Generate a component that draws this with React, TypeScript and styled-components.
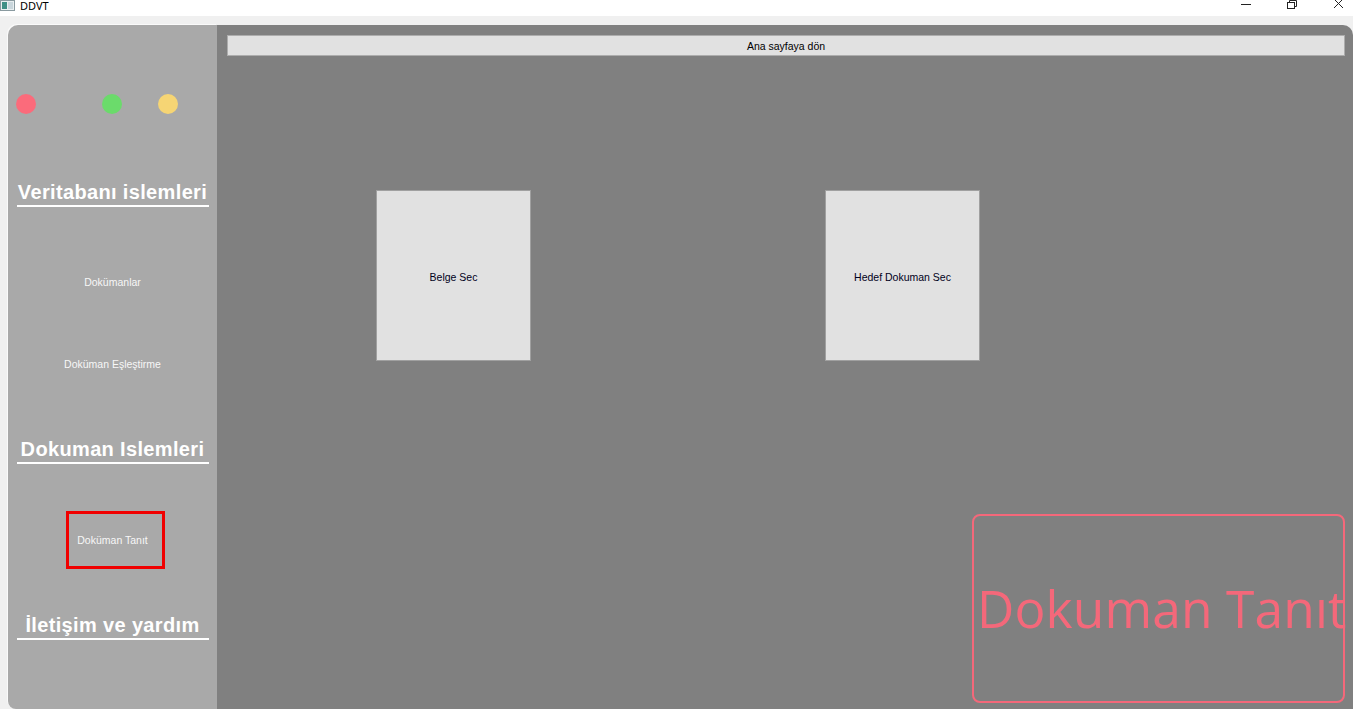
import React from "react";
import styled, { createGlobalStyle } from "styled-components";

const GlobalStyle = createGlobalStyle`
  html, body { margin: 0; padding: 0; }
  body {
    background: #f0f0f0;
    font-family: "Liberation Sans", Arial, sans-serif;
    overflow: hidden;
  }
`;

const Page = styled.div`
  width: 1353px;
  height: 709px;
  display: flex;
  flex-direction: column;
  overflow: hidden;
`;

const TitleBar = styled.div`
  height: 16px;
  background: #ffffff;
  display: flex;
  align-items: flex-start;
  flex-shrink: 0;
`;

const AppIcon = styled.svg`
  width: 15px;
  height: 11px;
  margin-right: 5px;
`;

const TitleText = styled.span`
  font-family: "Noto Sans", "Liberation Sans", sans-serif;
  font-size: 11px;
  line-height: 12px;
  margin-top: 0;
  color: #000;
`;

const Controls = styled.div`
  margin-left: auto;
  display: flex;
  align-items: flex-start;
  gap: 35px;
  padding-right: 9px;
`;

const CtrlIcon = styled.svg`
  width: 11px;
  height: 9px;
  display: block;
`;

const Body = styled.div`
  flex: 1;
  display: flex;
  padding: 9px 0 0 8px;
  min-height: 0;
`;

const Sidebar = styled.nav`
  width: 209px;
  flex-shrink: 0;
  background: #a9a9a9;
  border-radius: 10px 0 0 8px;
  box-shadow: -1px -1px 0 #fafafa;
  display: flex;
  flex-direction: column;
  align-items: center;
  padding-top: 69px;
  box-sizing: border-box;
`;

const DotRow = styled.div`
  align-self: stretch;
  display: flex;
  padding-left: 8px;
  height: 20px;
`;

const Dot = styled.span<{ $color: string; $ml: number }>`
  width: 20px;
  height: 20px;
  border-radius: 50%;
  background: ${(p) => p.$color};
  margin-left: ${(p) => p.$ml}px;
`;

const Heading = styled.h2<{ $mt: number }>`
  width: 192px;
  margin: ${(p) => p.$mt}px 0 0;
  font-family: "Liberation Sans", Arial, sans-serif;
  font-weight: 700;
  font-size: 20px;
  line-height: 22px;
  letter-spacing: 0.35px;
  color: #ffffff;
  text-align: center;
  white-space: nowrap;
  padding-bottom: 2px;
  border-bottom: 2px solid #ffffff;
`;

const NavButton = styled.button<{ $mt: number; $active?: boolean }>`
  width: 99px;
  height: 58px;
  margin-top: ${(p) => p.$mt}px;
  margin-left: ${(p) => (p.$active ? 5 : 0)}px;
  background: transparent;
  border: 3px solid ${(p) => (p.$active ? "#f00000" : "transparent")};
  color: #f7f7f7;
  font-family: "Liberation Sans", Arial, sans-serif;
  font-size: 10.5px;
  white-space: nowrap;
  padding: 0 ${(p) => (p.$active ? 5 : 0)}px 0 0;
  display: flex;
  align-items: center;
  justify-content: center;
  overflow: visible;
`;

const Main = styled.main`
  flex: 1;
  background: #808080;
  border-top-right-radius: 10px;
  display: flex;
  flex-direction: column;
  padding: 10px 8px 6px 10px;
  box-sizing: border-box;
  min-width: 0;
`;

const HomeButton = styled.button`
  height: 21px;
  width: 100%;
  background: #e1e1e1;
  border: 1px solid #adadad;
  font-family: "Liberation Sans", Arial, sans-serif;
  font-size: 10.5px;
  color: #000;
  padding: 0;
`;

const ChooserRow = styled.div`
  display: flex;
  gap: 294px;
  margin-top: 134px;
  padding-left: 149px;
`;

const ChooserButton = styled.button`
  width: 155px;
  height: 171px;
  background: #e1e1e1;
  border: 1px solid #a0a0a0;
  font-family: "Liberation Sans", Arial, sans-serif;
  font-size: 10.5px;
  color: #000020;
  padding: 2px 0 0;
  box-sizing: border-box;
`;

const Preview = styled.div`
  margin-top: auto;
  align-self: flex-end;
  width: 373px;
  height: 189px;
  box-sizing: border-box;
  border: 2px solid #f4687a;
  border-radius: 8px;
  display: flex;
  align-items: center;
  padding-left: 3px;
  overflow: visible;
`;

const PreviewText = styled.span`
  font-family: "Open Sans", "Noto Sans", sans-serif;
  font-size: 51.5px;
  letter-spacing: 0.1px;
  color: #f4687a;
  white-space: nowrap;
  margin-top: -2px;
`;

export default function App() {
  return (
    <Page>
      <GlobalStyle />
      <TitleBar>
        <AppIcon viewBox="0 0 15 11">
          <rect x="0.5" y="0.5" width="14" height="10" fill="#e8eef0" stroke="#8a9aa0" />
          <rect x="2" y="2" width="5" height="7" fill="#3f8f86" />
          <rect x="8" y="2" width="5" height="7" fill="#c9d6dc" />
        </AppIcon>
        <TitleText>DDVT</TitleText>
        <Controls>
          <CtrlIcon viewBox="0 0 11 9">
            <line x1="0" y1="4.5" x2="10" y2="4.5" stroke="#222" strokeWidth="1" />
          </CtrlIcon>
          <CtrlIcon viewBox="0 0 11 9">
            <rect x="0.5" y="2.5" width="7" height="6" fill="none" stroke="#222" />
            <path d="M2.5 2.5 V0.5 H9.5 V6.5 H7.5" fill="none" stroke="#222" />
          </CtrlIcon>
          <CtrlIcon viewBox="0 0 11 9">
            <path d="M1 -1 L10 8 M10 -1 L1 8" stroke="#222" strokeWidth="1" />
          </CtrlIcon>
        </Controls>
      </TitleBar>
      <Body>
        <Sidebar>
          <DotRow>
            <Dot $color="#fb6b7b" $ml={0} />
            <Dot $color="#6bdb6b" $ml={66} />
            <Dot $color="#f6d574" $ml={36} />
          </DotRow>
          <Heading $mt={67}>Veritabanı islemleri</Heading>
          <NavButton $mt={46}>Dokümanlar</NavButton>
          <NavButton $mt={24}>Doküman Eşleştirme</NavButton>
          <Heading $mt={45}>Dokuman Islemleri</Heading>
          <NavButton $mt={47} $active>
            Doküman Tanıt
          </NavButton>
          <Heading $mt={45}>İletişim ve yardım</Heading>
        </Sidebar>
        <Main>
          <HomeButton>Ana sayfaya dön</HomeButton>
          <ChooserRow>
            <ChooserButton>Belge Sec</ChooserButton>
            <ChooserButton>Hedef Dokuman Sec</ChooserButton>
          </ChooserRow>
          <Preview>
            <PreviewText>Dokuman Tanıt</PreviewText>
          </Preview>
        </Main>
      </Body>
    </Page>
  );
}
